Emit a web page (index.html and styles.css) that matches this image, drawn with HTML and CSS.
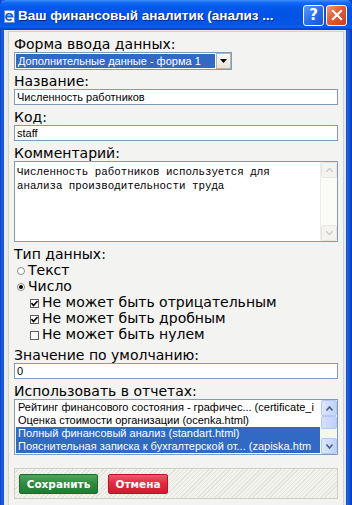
FILE: index.html
```html
<!DOCTYPE html>
<html lang="ru">
<head>
<meta charset="utf-8">
<title>Ваш финансовый аналитик</title>
<link rel="stylesheet" href="styles.css">
</head>
<body>
<div class="window">
  <div class="titlebar">
    <svg class="app-icon" width="13" height="13" viewBox="0 0 13 13">
      <rect x="1.5" y="0.5" width="10" height="12" fill="#ffffff" stroke="#6f8fc8"/>
      <path d="M3 6.5 H9.5 A3.3 3.3 0 1 0 8.6 9.2" fill="none" stroke="#1f5fd0" stroke-width="1.8"/>
    </svg>
    <span class="title">Ваш финансовый аналитик (анализ ...</span>
    <span class="tb-btn help">?</span>
    <span class="tb-btn close">
      <svg width="12" height="12" viewBox="0 0 12 12"><path d="M2 2 L10 10 M10 2 L2 10" stroke="#fff" stroke-width="2.2" stroke-linecap="square"/></svg>
    </span>
  </div>
  <div class="client">
    <div class="panel">
      <div class="label">Форма ввода данных:</div>
      <div class="select">
        <span class="select-value">Дополнительные данные - форма 1</span>
        <span class="select-btn"><svg width="7" height="4" viewBox="0 0 7 4"><path d="M0 0 H7 L3.5 4 Z" fill="#000"/></svg></span>
      </div>

      <div class="label gap3">Название:</div>
      <div class="input">Численность работников</div>

      <div class="label gap4">Код:</div>
      <div class="input">staff</div>

      <div class="label gap4">Комментарий:</div>
      <div class="textarea">
        <div class="ta-text">Численность работников используется для<br>анализа производительности труда</div>
        <div class="vscroll disabled">
          <span class="sb-btn"><svg width="7" height="4" viewBox="0 0 7 4"><path d="M0 4 L3.5 0.5 L7 4" fill="none" stroke="#cfcfc4" stroke-width="1.4"/></svg></span>
          <span class="sb-track"></span>
          <span class="sb-btn"><svg width="7" height="4" viewBox="0 0 7 4"><path d="M0 0 L3.5 3.5 L7 0" fill="none" stroke="#cfcfc4" stroke-width="1.4"/></svg></span>
        </div>
      </div>

      <div class="label gap4">Тип данных:</div>
      <div class="opt lvl1"><span class="radio"></span>Текст</div>
      <div class="opt lvl1"><span class="radio on"></span>Число</div>
      <div class="opt lvl2"><span class="check on"><svg width="7" height="7" viewBox="0 0 7 7"><path d="M0.5 3 L2.5 5.5 L6.5 1" fill="none" stroke="#000" stroke-width="1.6"/></svg></span>Не может быть отрицательным</div>
      <div class="opt lvl2"><span class="check on"><svg width="7" height="7" viewBox="0 0 7 7"><path d="M0.5 3 L2.5 5.5 L6.5 1" fill="none" stroke="#000" stroke-width="1.6"/></svg></span>Не может быть дробным</div>
      <div class="opt lvl2"><span class="check"></span>Не может быть нулем</div>

      <div class="label gap5">Значение по умолчанию:</div>
      <div class="input">0</div>

      <div class="label gap4">Использовать в отчетах:</div>
      <div class="listbox">
        <div class="items">
          <div class="item">Рейтинг финансового состояния - графичес... (certificate_i</div>
          <div class="item">Оценка стоимости организации (ocenka.html)</div>
          <div class="item sel">Полный финансовый анализ (standart.html)</div>
          <div class="item sel">Пояснительная записка к бухгалтерской от... (zapiska.htm</div>
        </div>
        <div class="vscroll">
          <span class="sb-btn xp"><svg width="7" height="5" viewBox="0 0 7 5"><path d="M0.5 4.5 L3.5 1 L6.5 4.5" fill="none" stroke="#4d6185" stroke-width="1.6"/></svg></span>
          <span class="sb-thumb"></span>
          <span class="sb-track"></span>
          <span class="sb-btn xp"><svg width="7" height="5" viewBox="0 0 7 5"><path d="M0.5 0.5 L3.5 4 L6.5 0.5" fill="none" stroke="#4d6185" stroke-width="1.6"/></svg></span>
        </div>
      </div>

      <div class="actions">
        <span class="btn save">Сохранить</span>
        <span class="btn cancel">Отмена</span>
      </div>
    </div>
  </div>
</div>
</body>
</html>
```

FILE: styles.css
```css
html, body {
  margin: 0;
  padding: 0;
  overflow: hidden;
  background: #ffffff;
}

.window {
  width: 352px;
  height: 505px;
  display: flex;
  flex-direction: column;
  background: linear-gradient(to right, #0a3fc8 0, #1c5fe6 2px, #0b52dc 4px, #0b52dc 346px, #1a62e6 348px, #0837b8 352px);
  overflow: hidden;
}

.titlebar {
  height: 30px;
  flex: none;
  display: flex;
  align-items: center;
  padding: 0 5px 0 3px;
  background: linear-gradient(to bottom, #3c8dfb 0, #0f68f4 3px, #0358ea 8px, #0053e3 16px, #0255e6 24px, #0a5ef0 27px, #003cc0 30px);
  border-radius: 6px 6px 0 0;
}

.app-icon {
  flex: none;
  margin: 2px 2px 0 0;
}

.title {
  flex: 1;
  min-width: 0;
  font-family: "Liberation Sans", sans-serif;
  font-weight: bold;
  font-size: 13.5px;
  color: #ffffff;
  white-space: nowrap;
  overflow: hidden;
  text-shadow: 1px 1px 0 #0a2a8a;
}

.tb-btn {
  flex: none;
  width: 19px;
  height: 19px;
  border: 1px solid #ffffff;
  border-radius: 3px;
  display: flex;
  align-items: center;
  justify-content: center;
  margin-top: 0;
}

.help {
  margin-right: 2px;
  background: linear-gradient(135deg, #5b9bff 0%, #2a6ff0 50%, #1a55d8 100%);
  color: #ffffff;
  font-family: "DejaVu Sans", sans-serif;
  font-weight: bold;
  font-size: 15px;
  line-height: 19px;
}

.close {
  background: linear-gradient(135deg, #f39a78 0%, #e45a32 45%, #c8401c 100%);
}

.client {
  flex: 1;
  margin: 0 6px 0 4px;
  background: #ebebe6;
  display: flex;
}

.panel {
  flex: 1;
  margin: 1px 2px 0 4px;
  border: 1px solid #d5d2c8;
  border-bottom: none;
  background: #f3f3f1;
  padding: 4px 5px 0 5px;
  display: flex;
  flex-direction: column;
  align-items: stretch;
}

.label {
  height: 16px;
  line-height: 16px;
  font-family: "DejaVu Sans", sans-serif;
  font-size: 14px;
  color: #000000;
  white-space: nowrap;
}

.gap3 { margin-top: 3px; }
.gap4 { margin-top: 4px; }
.gap5 { margin-top: 5px; }

.select {
  width: 218px;
  height: 18px;
  box-sizing: border-box;
  border: 1px solid #7f9db9;
  background: #ffffff;
  display: flex;
  padding: 1px 0 1px 1px;
}

.select-value {
  flex: 1;
  background: #316ac5;
  color: #ffffff;
  font-family: "Liberation Sans", sans-serif;
  font-size: 11px;
  line-height: 14px;
  padding-left: 2px;
  white-space: nowrap;
  overflow: hidden;
}

.select-btn {
  width: 15px;
  margin-left: 1px;
  box-sizing: border-box;
  border: 1px solid #b8b4a6;
  background: linear-gradient(to bottom, #fbfaf5, #e6e3d6);
  display: flex;
  align-items: center;
  justify-content: center;
  margin-top: -1px;
  margin-bottom: -1px;
}

.input {
  margin-top: 0;
  height: 16px;
  box-sizing: border-box;
  border: 1px solid #7f9db9;
  background: #ffffff;
  font-family: "Liberation Sans", sans-serif;
  font-size: 11px;
  line-height: 14px;
  padding-left: 2px;
  color: #000000;
  white-space: nowrap;
}

.textarea {
  height: 81px;
  box-sizing: border-box;
  border: 1px solid #7f9db9;
  background: #ffffff;
  display: flex;
}

.ta-text {
  flex: 1;
  font-family: "Liberation Mono", monospace;
  font-size: 10.8px;
  line-height: 14px;
  padding: 3px 0 0 2px;
  color: #000000;
  white-space: nowrap;
  overflow: hidden;
}

.vscroll {
  width: 16px;
  flex: none;
  display: flex;
  flex-direction: column;
  background: #f6f6f0;
}

.vscroll.disabled {
  background: #fbfbf7;
  border-left: 1px solid #eeede5;
}

.sb-btn {
  height: 16px;
  flex: none;
  box-sizing: border-box;
  border: 1px solid #e8e7df;
  background: #f4f3ee;
  display: flex;
  align-items: center;
  justify-content: center;
  border-radius: 2px;
}

.sb-btn.xp {
  border: 1px solid #b4c8f6;
  background: linear-gradient(to right, #dce6fd, #c0d2fb);
}

.sb-thumb {
  height: 13px;
  flex: none;
  box-sizing: border-box;
  border: 1px solid #b4c8f6;
  border-radius: 2px;
  background: linear-gradient(to right, #d4e0fd, #bfd0fa);
}

.sb-track {
  flex: 1;
}

.opt {
  height: 16px;
  line-height: 16px;
  font-family: "DejaVu Sans", sans-serif;
  font-size: 14px;
  color: #000000;
  display: flex;
  align-items: center;
  white-space: nowrap;
}

.lvl1 { padding-left: 3px; }
.lvl2 { padding-left: 16px; }

.radio {
  width: 8px;
  height: 8px;
  box-sizing: border-box;
  border: 1px solid #8a8a84;
  border-radius: 50%;
  background: #ffffff;
  margin-right: 3px;
  position: relative;
  top: 1px;
  display: flex;
  align-items: center;
  justify-content: center;
}

.radio.on::after {
  content: "";
  width: 4px;
  height: 4px;
  border-radius: 50%;
  background: #000000;
}

.check {
  width: 9px;
  height: 9px;
  box-sizing: border-box;
  border: 1px solid #5e5e5a;
  background: #ffffff;
  margin-right: 3px;
  position: relative;
  top: 1px;
  display: flex;
  align-items: center;
  justify-content: center;
}

.listbox {
  height: 56px;
  box-sizing: border-box;
  border: 1px solid #7f9db9;
  background: #ffffff;
  display: flex;
}

.items {
  flex: 1;
  padding: 1px 1px 0 1px;
  overflow: hidden;
}

.item {
  height: 13px;
  line-height: 13px;
  font-family: "Liberation Sans", sans-serif;
  font-size: 11px;
  color: #000000;
  white-space: nowrap;
  overflow: hidden;
  padding-left: 2px;
}

.item.sel {
  background: #316ac5;
  color: #ffffff;
}

.actions {
  margin-top: 13px;
  height: 31px;
  box-sizing: border-box;
  border: 1px solid #cfcdc4;
  background: repeating-linear-gradient(135deg, #f2f2ef 0, #f2f2ef 2px, #e4e4df 2px, #e4e4df 3px);
  display: flex;
  align-items: flex-start;
  padding: 5px 0 0 4px;
  gap: 10px;
}

.btn {
  height: 20px;
  box-sizing: border-box;
  border-radius: 2px;
  display: flex;
  align-items: center;
  justify-content: center;
  font-family: "DejaVu Sans", sans-serif;
  font-weight: bold;
  font-size: 10.5px;
  color: #ffffff;
}

.save {
  width: 79px;
  border: 1px solid #1d6a2a;
  background: linear-gradient(to bottom, #4aa65a 0%, #2f8c40 45%, #237a33 100%);
}

.cancel {
  width: 60px;
  border: 1px solid #b81428;
  background: linear-gradient(to bottom, #f4566a 0%, #e42a40 45%, #d01a30 100%);
}
```
